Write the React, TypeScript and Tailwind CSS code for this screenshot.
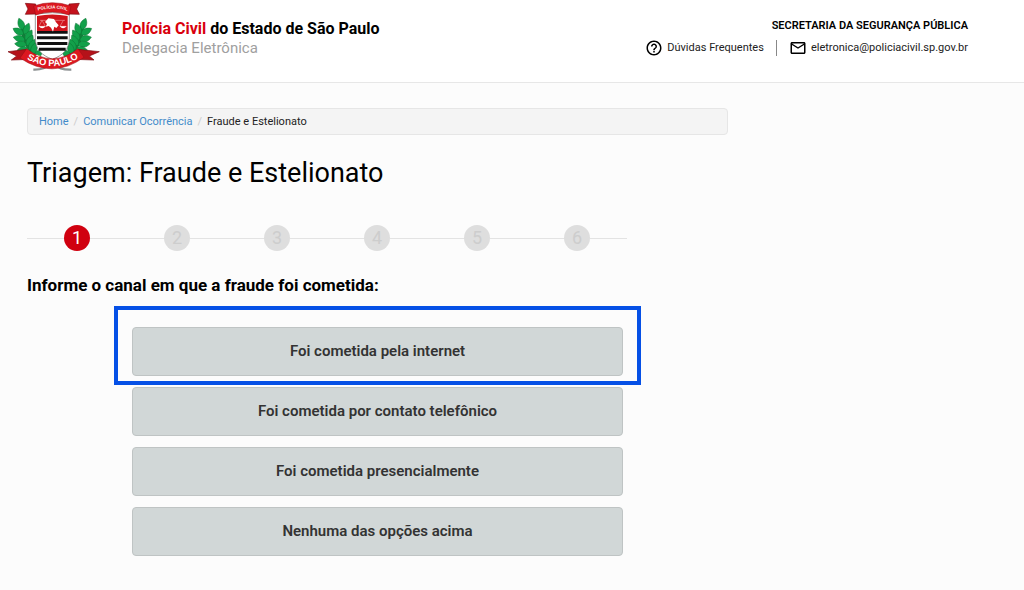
import { MdHelpOutline, MdMailOutline } from "react-icons/md";

const steps = [1, 2, 3, 4, 5, 6];

const options = [
  { label: "Foi cometida pela internet", highlighted: true },
  { label: "Foi cometida por contato telefônico", highlighted: false },
  { label: "Foi cometida presencialmente", highlighted: false },
  { label: "Nenhuma das opções acima", highlighted: false },
];

// leaf positions for the left branch; the right branch is mirrored
const leaves = [
  { x: 68, y: 86, r: -105 },
  { x: 68, y: 102, r: -145 },
  { x: 74, y: 100, r: -62 },
  { x: 72, y: 120, r: -160 },
  { x: 78, y: 118, r: -52 },
  { x: 77, y: 134, r: -170 },
  { x: 82, y: 134, r: -55 },
  { x: 84, y: 148, r: -180 },
  { x: 90, y: 148, r: -60 },
  { x: 98, y: 160, r: -70 },
  { x: 104, y: 172, r: -40 },
];

function Branch() {
  return (
    <g>
      <path d="M68 76C68 115 80 145 118 176" fill="none" stroke="#12803a" strokeWidth="12" />
      {leaves.map((l) => (
        <path
          key={`${l.x}-${l.y}`}
          d="M-3 0C4 -13 20 -13 33 -3C20 12 4 12 -3 0Z"
          transform={`translate(${l.x} ${l.y}) rotate(${l.r})`}
          fill="#12a04a"
          stroke="#0d7434"
          strokeWidth="1.5"
        />
      ))}
    </g>
  );
}

function Emblem() {
  return (
    <svg viewBox="21 6 279 210" className="h-[70px] w-[93px] shrink-0" role="img" aria-label="Polícia Civil de São Paulo">
      <Branch />
      <g transform="translate(314 0) scale(-1 1)">
        <Branch />
      </g>
      <path d="M100 209C125 210 138 204 154 188M214 209C188 210 174 204 158 188" fill="none" stroke="#8b8f90" strokeWidth="7" />

      <path d="M106 42Q157 34 208 42V112C208 150 188 166 157 178C126 166 106 150 106 112Z" fill="#fff" stroke="#666" strokeWidth="2" />
      <path d="M111 48Q157 39 203 48V93H111Z" fill="#d0141c" />
      <path d="M111 93H203V101H111ZM111 109H203V118H111ZM112 126H202V135H112ZM117 143H197V152H117Z" fill="#111" />
      <path d="M120 61L195 61M126 61L117 79H136ZM190 61L180 79H199" fill="none" stroke="#f7b9bb" strokeWidth="1.5" />
      <path d="M116 79H137Q127 91 116 79ZM179 79H200Q189 91 179 79Z" fill="#fff" />
      <path d="M135 66L145 55L162 57L168 67L176 76L169 84L163 80L159 95L153 83L146 78L137 80L141 72Z" fill="#fff" />

      <path d="M76 10L107 12L111 42L76 43L84 27ZM238 10L207 12L203 42L238 43L230 27Z" fill="#c5121c" stroke="#7d0a10" strokeWidth="2" />
      <path d="M101 18Q157 -2 213 18L207 45Q157 27 107 45Z" fill="#dc1820" stroke="#9b0d14" strokeWidth="1.5" />
      <path id="topRibbon" d="M107 34Q157 17 209 34" fill="none" />
      <text fontSize="13" fontWeight="700" fill="#fff" textAnchor="middle" fontFamily="Liberation Sans, sans-serif">
        <textPath href="#topRibbon" startOffset="50%">POLÍCIA CIVIL</textPath>
      </text>

      <path d="M24 155L80 148L92 178L34 180L50 168ZM298 155L234 148L222 178L282 180L268 168Z" fill="#b5121a" stroke="#7d0a10" strokeWidth="2" />
      <path d="M80 146Q157 206 234 146L252 172Q157 240 60 174Z" fill="#dc1820" stroke="#9b0d14" strokeWidth="1.5" />
      <path id="bottomRibbon" d="M66 168Q157 230 250 165" fill="none" />
      <text fontSize="28" fontWeight="700" fill="#fff" textAnchor="middle" fontFamily="Liberation Sans, sans-serif">
        <textPath href="#bottomRibbon" startOffset="50%">SÃO PAULO</textPath>
      </text>
    </svg>
  );
}

function Header() {
  return (
    <header className="flex items-start justify-between border-b border-[#e7e7e7] bg-white pt-0.5 pr-14 pb-2.5 pl-[7px]">
      <div className="flex">
        <Emblem />
        <div className="ml-[22px] pt-[17px]">
          <p className="text-base leading-5 font-bold text-black">
            <span className="text-[#d9000d]">Polícia Civil</span> do Estado de São Paulo
          </p>
          <p className="text-[15px] leading-[18px] text-[#a0a0a0]">Delegacia Eletrônica</p>
        </div>
      </div>
      <div className="pt-4 text-right text-[11px]">
        <p className="leading-4 font-semibold text-black">SECRETARIA DA SEGURANÇA PÚBLICA</p>
        <div className="mt-1 flex items-center justify-end leading-5 text-[#222]">
          <a href="#duvidas" className="flex items-center gap-1">
            <MdHelpOutline size={18} className="text-black" />
            Dúvidas Frequentes
          </a>
          <span className="mx-3 h-4 w-px bg-[#888]" />
          <a href="mailto:eletronica@policiacivil.sp.gov.br" className="flex items-center gap-1">
            <MdMailOutline size={18} className="text-black" />
            eletronica@policiacivil.sp.gov.br
          </a>
        </div>
      </div>
    </header>
  );
}

function Breadcrumb() {
  return (
    <nav aria-label="breadcrumb" className="rounded-sm border border-[#e6e6e6] bg-[#f4f4f4] px-[11px] py-1">
      <ol className="flex text-[11px] leading-[17px] text-[#222]">
        <li>
          <a href="#home" className="text-[#428bca]">Home</a>
        </li>
        <li className="before:px-[5px] before:text-[#ccc] before:content-['/']">
          <a href="#comunicar" className="text-[#428bca]">Comunicar Ocorrência</a>
        </li>
        <li className="before:px-[5px] before:text-[#ccc] before:content-['/']" aria-current="page">
          Fraude e Estelionato
        </li>
      </ol>
    </nav>
  );
}

function Stepper({ current }: { current: number }) {
  return (
    <ol className="mt-[34px] grid max-w-[600px] grid-cols-6">
      {steps.map((n) => (
        <li key={n} className="flex items-center">
          <span className="h-px flex-1 bg-[#e3e3e3]" />
          <span
            className={`flex size-[26px] items-center justify-center rounded-full text-lg leading-none ${
              n === current ? "bg-[#d0000f] text-white" : "bg-[#dedede] text-[#cdcdcd]"
            }`}
          >
            {n}
          </span>
          <span className="h-px flex-1 bg-[#e3e3e3]" />
        </li>
      ))}
    </ol>
  );
}

export default function App() {
  return (
    <div className="min-h-screen bg-[#fcfcfc] font-[Roboto,sans-serif]">
      <Header />
      <main className="max-w-[755px] px-[27px] pt-[25px] pb-8">
        <Breadcrumb />
        <h1 className="mt-5 text-[27px] leading-9 text-black">Triagem: Fraude e Estelionato</h1>
        <Stepper current={1} />
        <h2 className="mt-[22px] text-[17px] leading-6 font-bold text-black">Informe o canal em que a fraude foi cometida:</h2>
        <div className="mt-[30px] ml-[105px] flex max-w-[491px] flex-col gap-[11px]">
          {options.map((o) => (
            <div key={o.label} className="relative">
              <button
                type="button"
                className="h-[49px] w-full rounded border border-[#bfc4c4] bg-[#d1d7d7] text-[15px] font-semibold text-[#333] hover:bg-[#c6cdcd]"
              >
                {o.label}
              </button>
              {o.highlighted && (
                <div className="pointer-events-none absolute -inset-x-[18px] -top-[21px] -bottom-[9px] border-4 border-[#0550e6]" />
              )}
            </div>
          ))}
        </div>
      </main>
    </div>
  );
}
